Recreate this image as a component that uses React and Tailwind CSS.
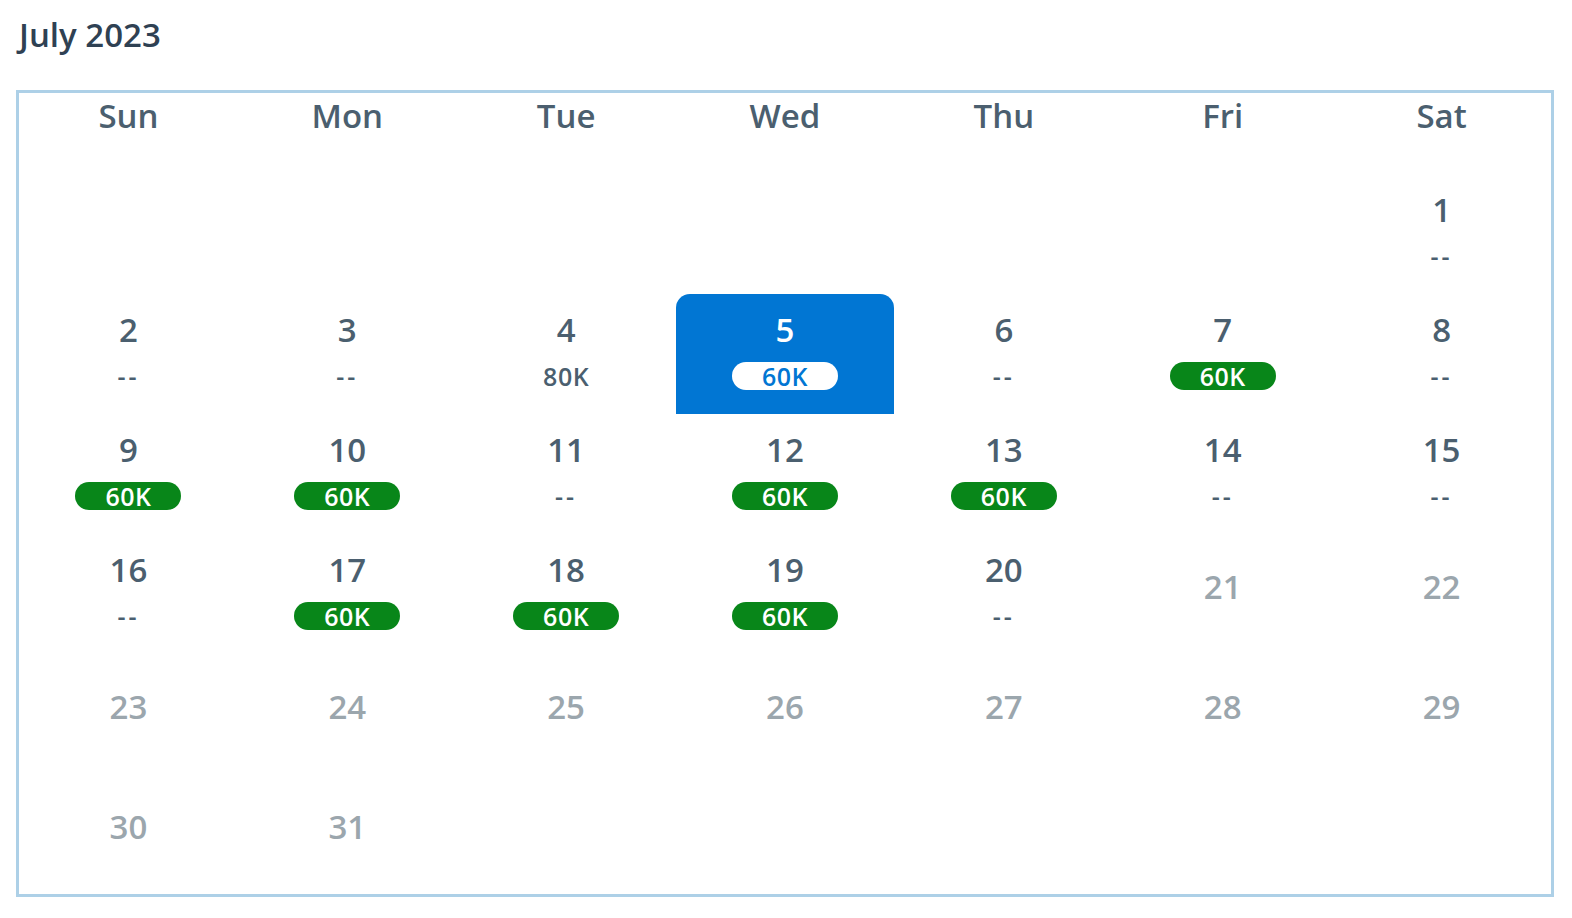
const DAYS = ["Sun", "Mon", "Tue", "Wed", "Thu", "Fri", "Sat"];

// price per day: "60K" -> green pill, other string -> plain text, null -> "--"
const PRICES = {
  1: null, 2: null, 3: null, 4: "80K", 5: "60K", 6: null, 7: "60K", 8: null,
  9: "60K", 10: "60K", 11: null, 12: "60K", 13: "60K", 14: null, 15: null,
  16: null, 17: "60K", 18: "60K", 19: "60K", 20: null,
};

const SELECTED = 5;
const LAST_ACTIVE = 20;

function DayCell({ day }) {
  if (!day) return <div className="h-[120px]" />;

  if (day > LAST_ACTIVE) {
    return (
      <div className="h-[120px] flex flex-col items-center pt-[33px]">
        <span className="text-[33px] leading-[40px] font-semibold text-[#9ba6ad]">{day}</span>
      </div>
    );
  }

  const price = PRICES[day];
  const selected = day === SELECTED;
  const cheap = price === "60K";

  return (
    <div
      className={`h-[120px] flex flex-col items-center pt-[16px] ${selected ? "bg-[#0176d3] rounded-t-[14px]" : ""}`}
    >
      <span className={`text-[33px] leading-[40px] font-semibold ${selected ? "text-white" : "text-[#4b5f6f]"}`}>
        {day}
      </span>
      <div className="mt-[12px] h-[28px] flex items-center justify-center">
        {cheap ? (
          <span
            className={`w-[106px] h-[28px] rounded-full flex items-center justify-center text-[25px] leading-none font-semibold tracking-[0.5px] ${
              selected ? "bg-white text-[#0176d3]" : "bg-[#088619] text-white"
            }`}
          >
            60K
          </span>
        ) : price ? (
          <span className="text-[25px] leading-none font-semibold tracking-[0.5px] text-[#4b5f6f]">{price}</span>
        ) : (
          <span className="text-[25px] leading-none font-semibold text-[#4b5f6f] tracking-[3px]">--</span>
        )}
      </div>
    </div>
  );
}

export default function App() {
  const cells = [];
  for (let i = 0; i < 6; i++) cells.push(null);
  for (let d = 1; d <= 31; d++) cells.push(d);
  while (cells.length % 7) cells.push(null);

  return (
    <div className="min-h-screen bg-white pt-[14px] font-['Open_Sans','Noto_Sans',sans-serif]">
      <h1 className="ml-[19px] text-[33px] leading-[42px] font-semibold text-[#2f4153]">July 2023</h1>
      <div className="mt-[34px] ml-[16px] w-[1538px] h-[807px] border-[3px] border-[#add0e7]">
        <div className="grid grid-cols-7">
          {DAYS.map((d) => (
            <div key={d} className="h-[81px] pt-[3px] text-center text-[33px] leading-[40px] font-semibold text-[#4b5f6f]">
              {d}
            </div>
          ))}
          {cells.map((day, i) => (
            <DayCell key={i} day={day} />
          ))}
        </div>
      </div>
    </div>
  );
}
